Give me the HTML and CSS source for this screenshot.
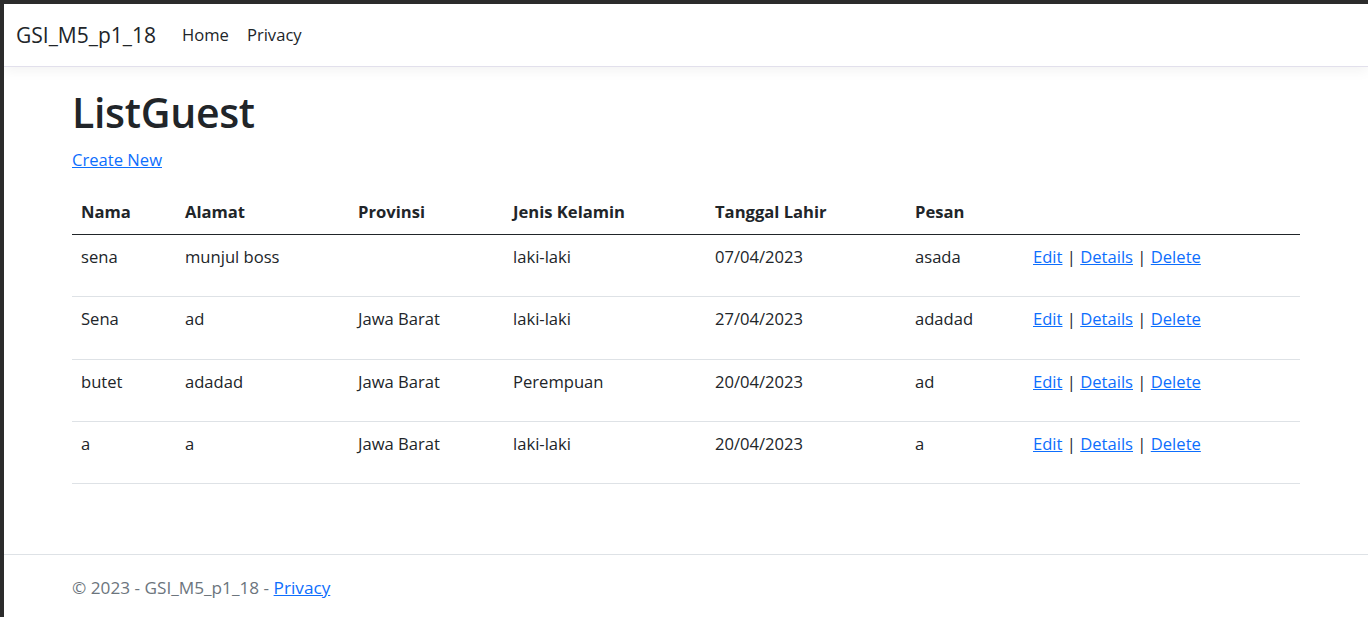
FILE: index.html
```html
<!DOCTYPE html>
<html lang="en">
<head>
<meta charset="utf-8">
<title>ListGuest - GSI_M5_p1_18</title>
<link rel="stylesheet" href="styles.css">
</head>
<body>
<div class="page">
  <header class="navbar">
    <a class="brand" href="#">GSI_M5_p1_18</a>
    <nav class="nav">
      <a class="nav-link" href="#">Home</a>
      <a class="nav-link" href="#">Privacy</a>
    </nav>
  </header>
  <main class="container main">
    <h1 class="title">ListGuest</h1>
    <p class="create"><a href="#">Create New</a></p>
    <table class="table">
      <colgroup>
        <col class="c1"><col class="c2"><col class="c3"><col class="c4"><col class="c5"><col class="c6"><col class="c7">
      </colgroup>
      <thead>
        <tr><th>Nama</th><th>Alamat</th><th>Provinsi</th><th>Jenis Kelamin</th><th>Tanggal Lahir</th><th>Pesan</th><th></th></tr>
      </thead>
      <tbody>
        <tr><td>sena</td><td>munjul boss</td><td></td><td>laki-laki</td><td>07/04/2023</td><td>asada</td><td><a href="#">Edit</a> | <a href="#">Details</a> | <a href="#">Delete</a></td></tr>
        <tr><td>Sena</td><td>ad</td><td>Jawa Barat</td><td>laki-laki</td><td>27/04/2023</td><td>adadad</td><td><a href="#">Edit</a> | <a href="#">Details</a> | <a href="#">Delete</a></td></tr>
        <tr><td>butet</td><td>adadad</td><td>Jawa Barat</td><td>Perempuan</td><td>20/04/2023</td><td>ad</td><td><a href="#">Edit</a> | <a href="#">Details</a> | <a href="#">Delete</a></td></tr>
        <tr><td>a</td><td>a</td><td>Jawa Barat</td><td>laki-laki</td><td>20/04/2023</td><td>a</td><td><a href="#">Edit</a> | <a href="#">Details</a> | <a href="#">Delete</a></td></tr>
      </tbody>
    </table>
  </main>
  <footer class="footer">
    <div class="container">&copy; 2023 - GSI_M5_p1_18 - <a href="#">Privacy</a></div>
  </footer>
</div>
</body>
</html>
```
FILE: styles.css
```css
html {
  background: #2b2b2b;
  height: 100%;
}
body {
  margin: 4px 0 0 4px;
  height: calc(100% - 4px);
  background: #fff;
  font-family: "Open Sans", "Noto Sans", sans-serif;
  font-size: 16.6px;
  line-height: 26.4px;
  color: #212529;
  overflow: hidden;
}
.page {
  display: flex;
  flex-direction: column;
  height: 100%;
}
a {
  color: #0d6efd;
  text-decoration: underline;
}
.navbar {
  display: flex;
  align-items: center;
  height: 62px;
  padding: 0 13px 0 12px;
  border-bottom: 1px solid #e2e0ec;
  box-shadow: 0 4px 12px rgba(0, 0, 0, 0.05);
  background: #fff;
  flex-shrink: 0;
}
.brand {
  font-size: 21px;
  color: #212529;
  text-decoration: none;
  margin-right: 17px;
  line-height: 33px;
}
.nav {
  display: flex;
}
.nav-link {
  color: #212529;
  text-decoration: none;
  padding: 0 9px;
}
.container {
  width: 1228px;
  margin: 0 auto;
  padding: 0 12px;
}
.main {
  padding-top: 19px;
}
.title {
  margin: 0 0 9px;
  font-size: 41px;
  font-weight: 600;
  line-height: 52px;
  letter-spacing: -0.3px;
}
.create {
  margin: 0 0 18px;
}
.table {
  width: 100%;
  border-collapse: collapse;
}
.c1 { width: 104px; }
.c2 { width: 173px; }
.c3 { width: 155px; }
.c4 { width: 202px; }
.c5 { width: 200px; }
.c6 { width: 118px; }
.table th {
  text-align: left;
  font-weight: 700;
  padding: 8px 9px 8px;
  border-bottom: 1px solid #212529;
}
.table td {
  padding: 9px 9px 26px;
  border-bottom: 1px solid #dee2e6;
  vertical-align: top;
}
.footer {
  margin-top: auto;
  border-top: 1px solid #dee2e6;
  padding-top: 3px;
  line-height: 59px;
  font-size: 17.2px;
  color: #6c757d;
  flex-shrink: 0;
}
```
